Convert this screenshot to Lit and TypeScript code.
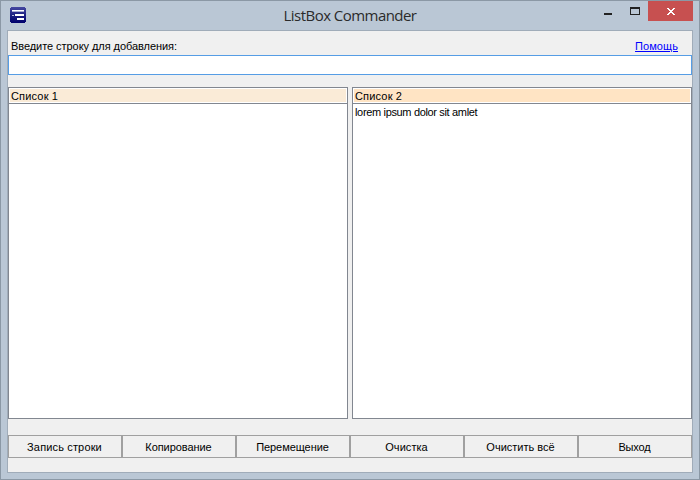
import { LitElement, html, css } from "lit";
import { customElement, property, state } from "lit/decorators.js";
import { styleMap } from "lit/directives/style-map.js";

interface Action {
  label: string;
  tracking: number;
}

const ACTIONS: Action[] = [
  { label: "Запись строки", tracking: 0.15 },
  { label: "Копирование", tracking: -0.06 },
  { label: "Перемещение", tracking: -0.06 },
  { label: "Очистка", tracking: 0.05 },
  { label: "Очистить всё", tracking: 0 },
  { label: "Выход", tracking: -0.15 },
];

@customElement("list-panel")
class ListPanel extends LitElement {
  @property() heading = "";
  @property({ type: Array }) items: string[] = [];
  @property({ type: Boolean, reflect: true }) active = false;

  static styles = css`
    :host {
      display: flex;
      flex-direction: column;
      box-sizing: border-box;
      border: 1px solid #828790;
      background: #fff;
      min-width: 0;
    }
    .heading {
      box-sizing: border-box;
      height: 16px;
      padding: 1px;
      border-bottom: 1px solid #828790;
    }
    .fill {
      height: 13px;
      line-height: 14px;
      padding-left: 1px;
      background: #faebd7;
      letter-spacing: 0.17px;
    }
    :host([active]) .fill {
      background: #ffe4c4;
    }
    .item {
      height: 13px;
      line-height: 14px;
      margin-top: 1px;
      padding-left: 2px;
      letter-spacing: -0.34px;
      white-space: nowrap;
    }
  `;

  render() {
    return html`
      <div class="heading"><div class="fill">${this.heading}</div></div>
      ${this.items.map((i) => html`<div class="item">${i}</div>`)}
    `;
  }
}

@customElement("app-root")
class AppRoot extends LitElement {
  @state() first: string[] = [];
  @state() second: string[] = ["lorem ipsum dolor sit amlet"];

  static styles = css`
    :host {
      display: flex;
      flex-direction: column;
      box-sizing: border-box;
      width: 700px;
      height: 480px;
      border: 1px solid #8b98a5;
      background: #bac7d5;
      padding: 0 6px 6px;
      font: 11px "Liberation Sans", Arial, sans-serif;
      color: #000;
      overflow: hidden;
    }
    .titlebar {
      display: grid;
      grid-template-columns: 106px 1fr 106px;
      height: 29px;
      flex: none;
    }
    .logo {
      margin: 6px 0 0 3px;
    }
    svg {
      display: block;
    }
    .title {
      text-align: center;
      font: 15px/29px "Open Sans", "Noto Sans", sans-serif;
      letter-spacing: -0.54px;
      color: #2b2b2b;
    }
    .controls {
      display: flex;
      justify-content: flex-end;
    }
    .client {
      flex: 1;
      display: flex;
      flex-direction: column;
      border: 1px solid #a0acb9;
      background: #f0f0f0;
    }
    .prompt {
      display: flex;
      justify-content: space-between;
      height: 16px;
      margin-top: 8px;
      padding: 0 14px 0 3px;
      line-height: 15px;
    }
    .label {
      letter-spacing: -0.06px;
    }
    .help {
      color: #00f;
      text-decoration: underline;
      letter-spacing: 0.08px;
    }
    .entry {
      box-sizing: border-box;
      width: 100%;
      height: 20px;
      padding: 0 3px;
      border: 1px solid #569de5;
      border-radius: 0;
      background: #fff;
      font: inherit;
      outline: none;
    }
    .lists {
      display: grid;
      grid-template-columns: 1fr 1fr;
      gap: 4px;
      height: 332px;
      margin-top: 12px;
    }
    .buttons {
      display: grid;
      grid-template-columns: repeat(6, 1fr);
      margin-top: 16px;
    }
    .button {
      box-sizing: border-box;
      height: 23px;
      padding: 2px 1px 0 0;
      border: 1px solid #a0a0a0;
      border-radius: 0;
      background: #f0f0f0;
      font: inherit;
      color: #000;
      line-height: 19px;
    }
  `;

  render() {
    return html`
      <div class="titlebar">
        <svg class="logo" width="16" height="16" viewBox="0 0 16 16" shape-rendering="crispEdges">
          <defs>
            <linearGradient id="g" x1="0" y1="0" x2="0" y2="1">
              <stop offset="0" stop-color="#4548a0" />
              <stop offset="0.5" stop-color="#1d2083" />
              <stop offset="1" stop-color="#00006c" />
            </linearGradient>
          </defs>
          <path d="M1 0h14v1h1v14h-1v1H1v-1H0V1h1z" fill="url(#g)" />
          <path d="M2 3h12v1H2zM5 7h9v2H5zM7 11h7v2H7z" fill="#fff" />
          <path d="M2 4h12v1H2z" fill="#a9abd3" />
          <path d="M2 8h1v1H2zM3 8h1v1H3z" fill="#b9bbdc" />
        </svg>
        <div class="title">ListBox Commander</div>
        <div class="controls">
          <svg width="100" height="20" viewBox="0 0 100 20" shape-rendering="crispEdges">
            <path d="M11 12h8v2h-8z" fill="#222" />
            <path d="M37 6h10v8H37zM38 8v5h8V8z" fill="#222" fill-rule="evenodd" />
            <path d="M55 0h45v20H55z" fill="#c75050" />
            <path
              d="M74 7h2v1h1v1h2V8h1V7h2v1h-1v1h-1v1h-1v1h1v1h1v1h1v1h-2v-1h-1v-1h-2v1h-1v1h-2v-1h1v-1h1v-1h1v-1h-1V9h-1V8h-1z"
              fill="#fff"
            />
          </svg>
        </div>
      </div>
      <div class="client">
        <div class="prompt">
          <span class="label">Введите строку для добавления:</span>
          <span class="help">Помощь</span>
        </div>
        <input class="entry" type="text" />
        <div class="lists">
          <list-panel heading="Список 1" .items=${this.first}></list-panel>
          <list-panel heading="Список 2" active .items=${this.second}></list-panel>
        </div>
        <div class="buttons">
          ${ACTIONS.map(
            (a) => html`<button class="button" style=${styleMap({ letterSpacing: `${a.tracking}px` })}>${a.label}</button>`
          )}
        </div>
      </div>
    `;
  }
}
